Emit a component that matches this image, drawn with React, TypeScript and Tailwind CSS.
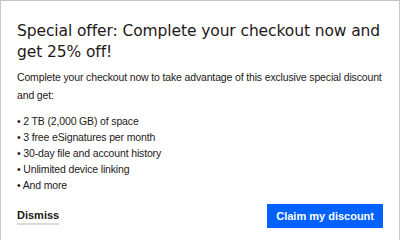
export default function App() {
  const perks = [
    "2 TB (2,000 GB) of space",
    "3 free eSignatures per month",
    "30-day file and account history",
    "Unlimited device linking",
    "And more",
  ];

  return (
    <div className="w-[400px] h-[240px] overflow-hidden bg-white">
      <div className="h-[260px] border border-[#c9c7c5] bg-white px-4 pt-[20px] text-[#1e1919]">
        <h1
          className="text-[15.5px] leading-[21px] tracking-[-0.1px] font-normal"
          style={{ fontFamily: '"DejaVu Sans", sans-serif' }}
        >
          Special offer: Complete your checkout now and get 25% off!
        </h1>
        <div
          className="text-[10.5px] tracking-[-0.15px] text-[#1e1919]"
          style={{ fontFamily: '"Liberation Sans", Arial, sans-serif' }}
        >
          <p className="mt-[5px] leading-[18px]">
            Complete your checkout now to take advantage of this exclusive special discount
            and get:
          </p>
          <ul className="mt-[9px] leading-[16px]">
            {perks.map((p) => (
              <li key={p}>• {p}</li>
            ))}
          </ul>
        </div>
        <div
          className="mt-[11px] flex items-center justify-between"
          style={{ fontFamily: '"Liberation Sans", Arial, sans-serif' }}
        >
          <button className="text-[11px] font-bold leading-[15px] border-b-2 border-[#dedbd7]">
            Dismiss
          </button>
          <button className="h-[24px] px-[9px] bg-[#0061fe] text-white text-[11px] font-bold">
            Claim my discount
          </button>
        </div>
      </div>
    </div>
  );
}
